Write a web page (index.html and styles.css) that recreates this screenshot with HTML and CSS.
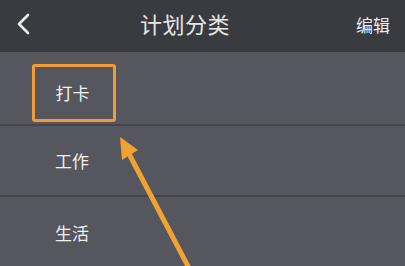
FILE: index.html
```html
<!DOCTYPE html>
<html lang="zh">
<head>
<meta charset="utf-8">
<link rel="stylesheet" href="styles.css">
</head>
<body>
<div class="screen">
  <header class="nav">
    <svg class="back" width="16" height="22" viewBox="0 0 16 22"><polyline points="12,2 3,11 12,20" fill="none" stroke="#eeeeee" stroke-width="2.6" stroke-linecap="round" stroke-linejoin="round"/></svg>
    <div class="title">计划分类</div>
    <div class="edit">编辑</div>
  </header>
  <ul class="list">
    <li class="row row-first"><span class="label boxed">打卡</span></li>
    <li class="row row-mid"><span class="label">工作</span></li>
    <li class="row row-last"><span class="label">生活</span></li>
  </ul>
  <svg class="arrow" width="405" height="266" viewBox="0 0 405 266">
    <line x1="127" y1="150" x2="190" y2="270" stroke="#f0a233" stroke-width="5"/>
    <polygon points="120,137 138,150 122,160" fill="#f0a233"/>
  </svg>
</div>
</body>
</html>
```
FILE: styles.css
```css
html, body {
  margin: 0;
  padding: 0;
}
body {
  width: 405px;
  height: 266px;
  overflow: hidden;
  background: #56565e;
  font-family: "Noto Sans CJK SC", "Noto Sans", sans-serif;
  color: #f0f0f0;
}
.screen {
  position: relative;
  width: 405px;
  height: 266px;
  overflow: hidden;
}
.nav {
  height: 52px;
  background: #3a3a41;
  display: flex;
  align-items: center;
  position: relative;
}
.back {
  margin-left: 16px;
  margin-top: -4px;
}
.title {
  position: absolute;
  left: 140px;
  top: 8px;
  font-size: 22px;
  line-height: 30px;
  color: #e6e6e6;
  letter-spacing: 0.5px;
}
.edit {
  margin-left: auto;
  margin-right: 15px;
  margin-top: -4px;
  font-size: 17px;
  color: #ececec;
}
.list {
  list-style: none;
  margin: 0;
  padding: 0;
}
.row {
  display: flex;
  align-items: center;
  padding-left: 55px;
  border-bottom: 2px solid #45454c;
  font-size: 17px;
}
.row-first {
  height: 72px;
  padding-left: 32px;
  align-items: flex-start;
}
.row-mid {
  height: 69px;
}
.row-last {
  height: 72px;
  border-bottom: none;
}
.label {
  line-height: 20px;
}
.boxed {
  margin-top: 12px;
  width: 75px;
  height: 52px;
  border: 3px solid #ef9b38;
  border-radius: 3px;
  display: flex;
  align-items: center;
  justify-content: center;
  padding-right: 3px;
  box-sizing: content-box;
}
.arrow {
  position: absolute;
  left: 0;
  top: 0;
  pointer-events: none;
}
```
